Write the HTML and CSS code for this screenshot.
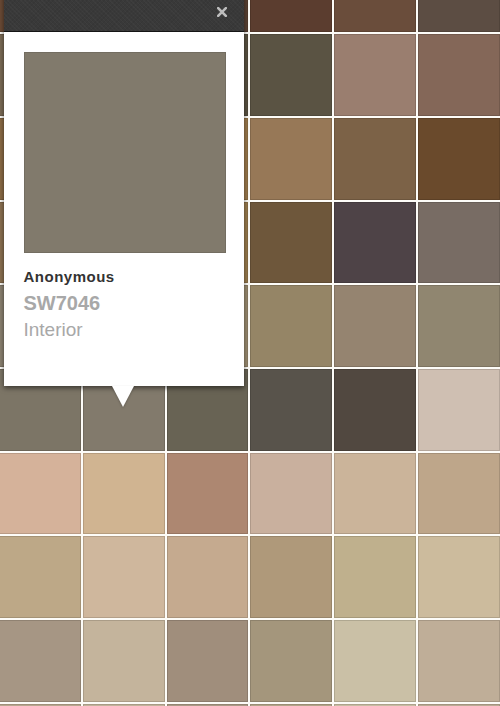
FILE: index.html
```html
<!DOCTYPE html>
<html>
<head>
<meta charset="utf-8">
<link rel="stylesheet" href="styles.css">
</head>
<body>
<div class="page">
  <div class="grid">
    <div class="cell" style="background:#6a4a35"></div>
    <div class="cell" style="background:#5e4636"></div>
    <div class="cell" style="background:#5a4233"></div>
    <div class="cell" style="background:#5b3d2f"></div>
    <div class="cell" style="background:#6a4d3b"></div>
    <div class="cell" style="background:#5c4d43"></div>

    <div class="cell" style="background:#7a6a55"></div>
    <div class="cell" style="background:#6f6250"></div>
    <div class="cell" style="background:#5a5242"></div>
    <div class="cell" style="background:#5a5343"></div>
    <div class="cell" style="background:#9a7e6f"></div>
    <div class="cell" style="background:#846758"></div>

    <div class="cell" style="background:#8a6a45"></div>
    <div class="cell" style="background:#8d7050"></div>
    <div class="cell" style="background:#9c7a4c"></div>
    <div class="cell" style="background:#977857"></div>
    <div class="cell" style="background:#7c6247"></div>
    <div class="cell" style="background:#6a4a2c"></div>

    <div class="cell" style="background:#8a7050"></div>
    <div class="cell" style="background:#7e6a55"></div>
    <div class="cell" style="background:#9a7c4e"></div>
    <div class="cell" style="background:#6e573b"></div>
    <div class="cell" style="background:#4e4347"></div>
    <div class="cell" style="background:#786c64"></div>

    <div class="cell" style="background:#8a8070"></div>
    <div class="cell" style="background:#8f8068"></div>
    <div class="cell" style="background:#9b8c70"></div>
    <div class="cell" style="background:#958566"></div>
    <div class="cell" style="background:#958470"></div>
    <div class="cell" style="background:#908670"></div>

    <div class="cell" style="background:#7c7566"></div>
    <div class="cell" style="background:#827a6c"></div>
    <div class="cell" style="background:#686354"></div>
    <div class="cell" style="background:#58534b"></div>
    <div class="cell" style="background:#514840"></div>
    <div class="cell" style="background:#cfbfb2"></div>

    <div class="cell" style="background:#d5b29a"></div>
    <div class="cell" style="background:#d0b491"></div>
    <div class="cell" style="background:#ad8771"></div>
    <div class="cell" style="background:#c9b09e"></div>
    <div class="cell" style="background:#cbb49a"></div>
    <div class="cell" style="background:#bea68a"></div>

    <div class="cell" style="background:#bda887"></div>
    <div class="cell" style="background:#cfb79d"></div>
    <div class="cell" style="background:#c5aa8f"></div>
    <div class="cell" style="background:#af997a"></div>
    <div class="cell" style="background:#bfb08d"></div>
    <div class="cell" style="background:#ccbb9d"></div>

    <div class="cell" style="background:#a69684"></div>
    <div class="cell" style="background:#c4b49c"></div>
    <div class="cell" style="background:#a08e7c"></div>
    <div class="cell" style="background:#a4967c"></div>
    <div class="cell" style="background:#cac0a6"></div>
    <div class="cell" style="background:#bfae98"></div>

    <div class="cell" style="background:#b8a68e"></div>
    <div class="cell" style="background:#c2b29a"></div>
    <div class="cell" style="background:#ab9985"></div>
    <div class="cell" style="background:#b3a488"></div>
    <div class="cell" style="background:#c8bca2"></div>
    <div class="cell" style="background:#bcaa94"></div>
  </div>

  <div class="popup">
    <div class="popup-head">
      <svg class="close" width="10" height="10" viewBox="0 0 10 10">
        <path d="M1.2 1.2 L8.8 8.8 M8.8 1.2 L1.2 8.8" stroke="#bdbdbd" stroke-width="2.6" stroke-linecap="square" fill="none"/>
      </svg>
    </div>
    <div class="popup-body">
      <div class="swatch"></div>
      <div class="name">Anonymous</div>
      <div class="code">SW7046</div>
      <div class="type">Interior</div>
    </div>
    <div class="arrow"></div>
  </div>
</div>
</body>
</html>
```

FILE: styles.css
```css
html, body {
  margin: 0;
  padding: 0;
  background: #ffffff;
}

body {
  width: 500px;
  height: 706px;
  overflow: hidden;
  font-family: "Liberation Sans", Arial, sans-serif;
}

.page {
  position: relative;
  width: 500px;
  height: 706px;
  overflow: hidden;
  background: #fdfcf8;
}

.grid {
  display: grid;
  grid-template-columns: repeat(6, 81.83px);
  grid-auto-rows: 81.7px;
  gap: 2px;
  margin-top: -49.4px;
  margin-left: -1px;
  width: 501px;
}

.cell {
  box-shadow: inset 0 0 0 1px rgba(0, 0, 0, 0.13);
}

.popup {
  position: absolute;
  left: 3.5px;
  top: -10px;
  width: 240px;
  box-shadow: 0 2px 5px rgba(0, 0, 0, 0.55);
}

.popup-head {
  height: 42px;
  box-sizing: border-box;
  border-bottom: 1px solid #151515;
  background-color: #393939;
  background-image:
    repeating-linear-gradient(45deg, rgba(255,255,255,0.025) 0 1px, transparent 1px 3px),
    repeating-linear-gradient(-45deg, rgba(0,0,0,0.05) 0 1px, transparent 1px 3px);
  display: flex;
  justify-content: flex-end;
  align-items: flex-end;
  padding: 0 17px 14px 0;
}

.close {
  display: block;
}

.popup-body {
  background: #ffffff;
  padding: 20px 18px 44px 20px;
}

.swatch {
  width: 200px;
  height: 199px;
  background: #817a6c;
  border: 1px solid #736d61;
}

.name {
  margin-top: 15px;
  font-size: 15px;
  line-height: 18px;
  font-weight: bold;
  color: #333333;
  letter-spacing: 0.5px;
}

.code {
  margin-top: 5px;
  font-size: 20px;
  line-height: 24px;
  font-weight: bold;
  color: #a8a8a8;
}

.type {
  margin-top: 3px;
  font-size: 19px;
  line-height: 24px;
  color: #a8a8a8;
}

.arrow {
  position: absolute;
  left: 108.5px;
  bottom: -21px;
  width: 0;
  height: 0;
  border-left: 11px solid transparent;
  border-right: 11px solid transparent;
  border-top: 21px solid #ffffff;
  filter: drop-shadow(0 1px 1px rgba(0, 0, 0, 0.25));
}
```
